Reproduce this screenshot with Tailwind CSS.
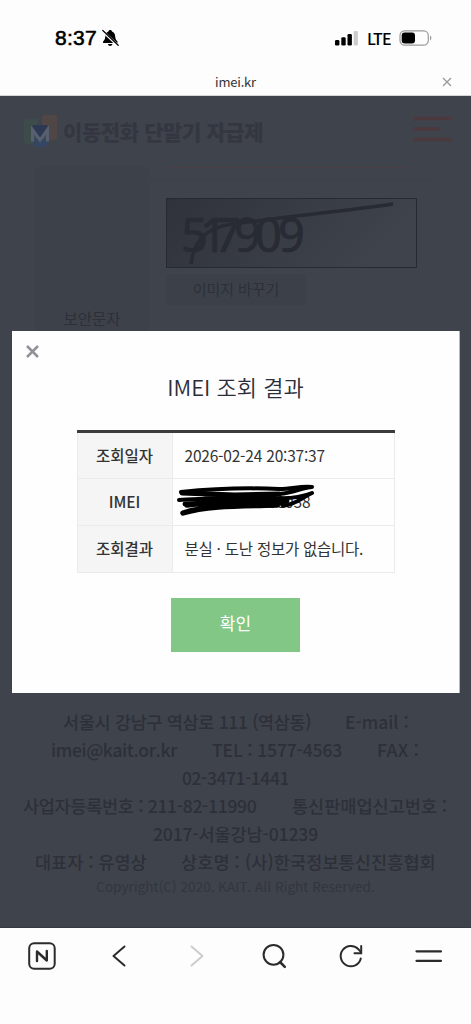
<!DOCTYPE html>
<html lang="ko">
<head>
<meta charset="utf-8">
<meta name="viewport" content="width=device-width, initial-scale=1">
<title>imei.kr</title>
<script src="https://cdn.jsdelivr.net/npm/@tailwindcss/browser@4"></script>
</head>
<body class="w-[471px] h-[1024px] overflow-hidden bg-[#fdfdfd] font-['Noto_Sans_CJK_KR',sans-serif] flex flex-col">
  <!-- status bar -->
  <div class="h-[68px] shrink-0 pt-[26px] pl-[55px] pr-[39px] flex justify-between">
    <div class="flex h-6 items-center gap-1">
      <span class="w-[43px] font-['Liberation_Sans',sans-serif] text-[21px] leading-6 tracking-[0.3px] text-black [-webkit-text-stroke:0.6px_black]">8:37</span>
      <svg class="w-[17px] h-[18px]" viewBox="0 0 17 18">
        <path d="M8.2 1c-1 0-1.6.6-1.8 1.4C4.2 3.200 3.400 5 3.300 7.500c-.1 2.500-.8 3.500-2 4.700-.7.900-.3 1.900.7 1.900h12.600c1 0 1.400-1 .7-1.900-1.300-1.200-2-2.200-2.100-4.700-.1-2.500-1-4.300-3.200-5.100C9.800 1.600 9.200 1 8.200 1zM5.900 15c.3 1.300 1.200 2 2.300 2s2-.7 2.300-2z"/>
        <path d="M1 2.500 16.500 17" stroke="#fdfdfd" stroke-width="2.600"/>
        <path d="M.8 1.500 16.200 16.300" stroke="#000" stroke-width="1.200" stroke-linecap="round"/>
      </svg>
    </div>
    <div class="flex h-6 items-center">
      <svg class="w-[23px] h-[16px]" viewBox="0 0 23 16">
        <rect x="0" y="10" width="4.400" height="5.500" rx="1.300"/><rect x="6.300" y="7.200" width="4.400" height="8.300" rx="1.300"/><rect x="12.500" y="4" width="4.400" height="11.500" rx="1.300"/><rect x="18.700" y="1" width="4.200" height="14.500" rx="1.300" fill="#ccc"/>
      </svg>
      <span class="ml-[9px] w-[24px] font-medium text-[16px] leading-6 tracking-[-0.8px] text-black">LTE</span>
      <svg class="ml-[8px] w-[33px] h-[16px]" viewBox="0 0 33 16">
        <rect x="1" y=".8" width="28.300" height="14.400" rx="4.600" fill="none" stroke="#9b9b9b" stroke-width="1.200"/>
        <rect x="2.700" y="2.600" width="13.300" height="10.800" rx="3"/>
        <path d="M31 5.500v5c1.800-.7 1.800-4.300 0-5z" fill="#9b9b9b"/>
      </svg>
    </div>
  </div>
  <!-- address bar -->
  <div class="h-[28px] shrink-0 border-b border-[#d4d5d7] grid grid-cols-[1fr_auto_1fr] items-center">
    <span></span>
    <span class="text-[13px] leading-[27px] tracking-[-0.2px] text-[#333]">imei.kr</span>
    <svg class="justify-self-end mr-[19px] w-[10px] h-[10px]" viewBox="0 0 10 10"><path d="M1 1l8 8M9 1 1 9" stroke="#999" stroke-width="1.300"/></svg>
  </div>
  <!-- dimmed page -->
  <div class="relative h-[832px] shrink-0 bg-[#3f434c] text-[#2d3039] border-b border-[#353941] flex flex-col">
    <header class="h-[70px] shrink-0 pt-[18px] px-[18px] flex justify-between">
      <div class="flex">
        <svg class="ml-[5px] mt-[1px] w-[36px] h-[34px]" viewBox="0 0 36 34">
          <rect x="1" y="4" width="14" height="25" rx="2" fill="#3d4b4b"/>
          <rect x="19" y="0" width="15" height="25" rx="2" fill="#504646"/>
          <path d="M10 24h14v6q0 2-2 2H12q-2 0-2-2z" fill="#344662"/>
          <path d="M9 10h16l-8 13z" fill="#2d3853"/>
          <path d="M9.500 26.500V15l7.500 10 7.500-10v11.500" fill="none" stroke="#566073" stroke-width="3"/>
        </svg>
        <span class="ml-[4px] font-black text-[21px] leading-[34px] tracking-[-0.4px] text-[#343741] whitespace-nowrap">이동전화 단말기 자급제</span>
      </div>
      <svg class="mt-[2px] w-[41px] h-[27px]" viewBox="0 0 41 27"><path d="M2.500 2.500H38.500M2.500 13H26.500M2.500 23.500H38.500" stroke="#4c393d" stroke-width="3.500" stroke-linecap="round"/></svg>
    </header>
    <div class="mt-[1px] ml-[35px] h-[169px] shrink-0 flex">
      <div class="w-[114px] bg-[#3d4149] pt-[139px] text-center text-[15.500px] leading-[24px]">보안문자</div>
      <div class="ml-[17px] w-[270px]">
        <div class="h-px w-[243px] bg-[#4b3f47]"></div>
        <div class="-ml-4 mt-[11px] h-px w-[285px] bg-[#3c4049]"></div>
        <svg class="mt-[18px] w-[251px] h-[70px]" viewBox="0 0 251 70">
          <defs><linearGradient id="g" x1="0" y1="0" x2="1" y2=".25"><stop offset="0" stop-color="#2f323a"/><stop offset=".55" stop-color="#383c45"/><stop offset="1" stop-color="#3f434c"/></linearGradient></defs>
          <rect x=".5" y=".5" width="250" height="69" fill="url(#g)" stroke="#272a32"/>
          <text font-family="Noto Sans" font-size="47" fill="#282b34" stroke="#282b34" stroke-width=".7" x="15 34 48 68 89 112" y="54">517909</text>
          <path d="M25 66C28 42 40 30 66 26C110 20 170 14 227 6" fill="none" stroke="#282b34" stroke-width="3.500"/>
        </svg>
        <div class="mt-[6px] w-[140px] h-[31px] bg-[#3c4049] text-center text-[15px] leading-[30px] tracking-[-0.1px]">이미지 바꾸기</div>
      </div>
    </div>
    <footer class="mt-[372px] shrink-0 font-medium text-[17.500px] leading-[28px] text-center whitespace-nowrap">
      <div class="text-left pl-[63px] flex"><span class="w-[282px] tracking-[-0.33px]">서울시 강남구 역삼로 111 (역삼동)</span><span>E-mail :</span></div>
      <div class="text-left pl-[51px] flex"><span class="w-[161px] tracking-[-0.33px]">imei@kait.or.kr</span><span class="w-[165px] tracking-[-0.13px]">TEL : 1577-4563</span><span class="tracking-[0.3px]">FAX :</span></div>
      <div class="tracking-[-0.45px]">02-3471-1441</div>
      <div class="text-left pl-[23px] flex"><span class="w-[269px] tracking-[-0.3px]">사업자등록번호 : 211-82-11990</span><span>통신판매업신고번호 :</span></div>
      <div class="tracking-[-0.1px]">2017-서울강남-01239</div>
      <div class="text-left pl-[35px] flex"><span class="w-[146px]">대표자 : 유영상</span><span class="tracking-[0.1px]">상호명 : (사)한국정보통신진흥협회</span></div>
      <div class="text-[13.500px] leading-[20px] tracking-[0.06px] font-normal text-[#32363f]">Copyright(C) 2020. KAIT. All Right Reserved.</div>
    </footer>

    <!-- result dialog -->
    <section class="absolute left-[12px] top-[235px] w-[448px] h-[362px] bg-[#fefefe] border-r border-[#b5b7ba] flex flex-col items-center text-[#333]">
      <svg class="self-start ml-[14px] mt-[14px] w-[13px] h-[13px]" viewBox="0 0 13 13"><path d="M1 1l11 11M12 1 1 12" stroke="#919297" stroke-width="2.500"/></svg>
      <h1 class="mt-[10px] h-[36px] text-[22px] leading-[36px] font-[350] text-[#2b2e3a] whitespace-nowrap">IMEI 조회 결과</h1>
      <div class="mt-[26px] w-[318px] border-t-[3px] border-t-[#3c3c3e] text-[15.500px] leading-[44px]">
        <div class="flex h-[45px] border-x border-[#ebebeb]"><div class="w-[95px] bg-[#f5f5f5] text-center font-medium border-r border-[#ebebeb]">조회일자</div><div class="pl-[12px] tracking-[-0.2px]">2026-02-24 20:37:37</div></div>
        <div class="flex h-[47px] border border-b-0 border-[#ebebeb]"><div class="w-[95px] bg-[#f5f5f5] text-center font-medium border-r border-[#ebebeb]">IMEI</div>
          <div class="relative flex-1"><span class="absolute left-[87px] top-0 tracking-[-0.1px]">000038</span>
            <svg class="absolute left-[2px] top-[5px] w-[144px] h-[34px]" viewBox="0 0 144 34" fill="none" stroke="#000" stroke-width="4" stroke-linecap="round" stroke-linejoin="round">
              <path d="M6 8C45 4 82 4 104 5C118 5 126 1.500 137 3C128 3 120 9 104 10"/>
              <path d="M4 16C30 15 60 12 100 14C116 15 127 13 137 9C128 13 122 20 108 22"/>
              <path d="M7 9 60 11 104 10M10 20 70 19 112 17" stroke-width="5"/>
              <path d="M12 21C46 16 80 19 108 19M8 29C30 22 60 22 102 21" stroke-width="5.500"/>
              <path d="M30 16 98 15" stroke-width="7"/>
            </svg>
          </div></div>
        <div class="flex h-[48px] border border-[#ebebeb]"><div class="w-[95px] bg-[#f5f5f5] text-center font-medium border-r border-[#ebebeb]">조회결과</div><div class="pl-[12px] tracking-[-0.25px] whitespace-nowrap">분실 · 도난 정보가 없습니다.</div></div>
      </div>
      <button class="mt-[25px] w-[129px] h-[54px] shrink-0 bg-[#82c785] text-white text-[17px] leading-[48px] pb-1">확인</button>
    </section>
  </div>
  <!-- browser toolbar -->
  <nav class="h-[96px] pt-[14px] pl-[28px] pr-[29px] flex justify-between items-start">
    <svg class="w-7 h-7" viewBox="0 0 28 28" fill="none" stroke="#2b2b2b" stroke-linecap="round" stroke-linejoin="round"><rect x="1.200" y="1.200" width="25.500" height="25.500" rx="5" stroke-width="2"/><path d="M9 19V9.500L18.800 18.500V9" stroke-width="2.400"/></svg>
    <svg class="w-7 h-7" viewBox="0 0 28 28" fill="none" stroke="#2b2b2b" stroke-width="2" stroke-linecap="round" stroke-linejoin="round"><path d="M19.500 4.500 8.500 14l11 9.500"/></svg>
    <svg class="w-7 h-7" viewBox="0 0 28 28" fill="none" stroke="#ccc" stroke-width="2" stroke-linecap="round" stroke-linejoin="round"><path d="M9.500 4.500 20.500 14l-11 9.500"/></svg>
    <svg class="w-7 h-7" viewBox="0 0 28 28" fill="none" stroke="#2b2b2b" stroke-width="2" stroke-linecap="round"><circle cx="13.500" cy="12.800" r="9.900"/><path d="m20 20 4.800 4.800" stroke-width="2.500"/></svg>
    <svg class="w-7 h-7" viewBox="0 0 28 28" fill="none" stroke="#2b2b2b" stroke-width="2" stroke-linecap="round"><path d="M23.800 16.500A10.200 10.200 0 1 1 21.500 7.300L24 10.200"/><path d="M24.200 4v7.300H17.500"/></svg>
    <svg class="w-7 h-7" viewBox="0 0 28 28" fill="none" stroke="#2b2b2b" stroke-width="2.200" stroke-linecap="round"><path d="M2.500 9.300H27M2.500 18.800H27"/></svg>
  </nav>
</body>
</html>
